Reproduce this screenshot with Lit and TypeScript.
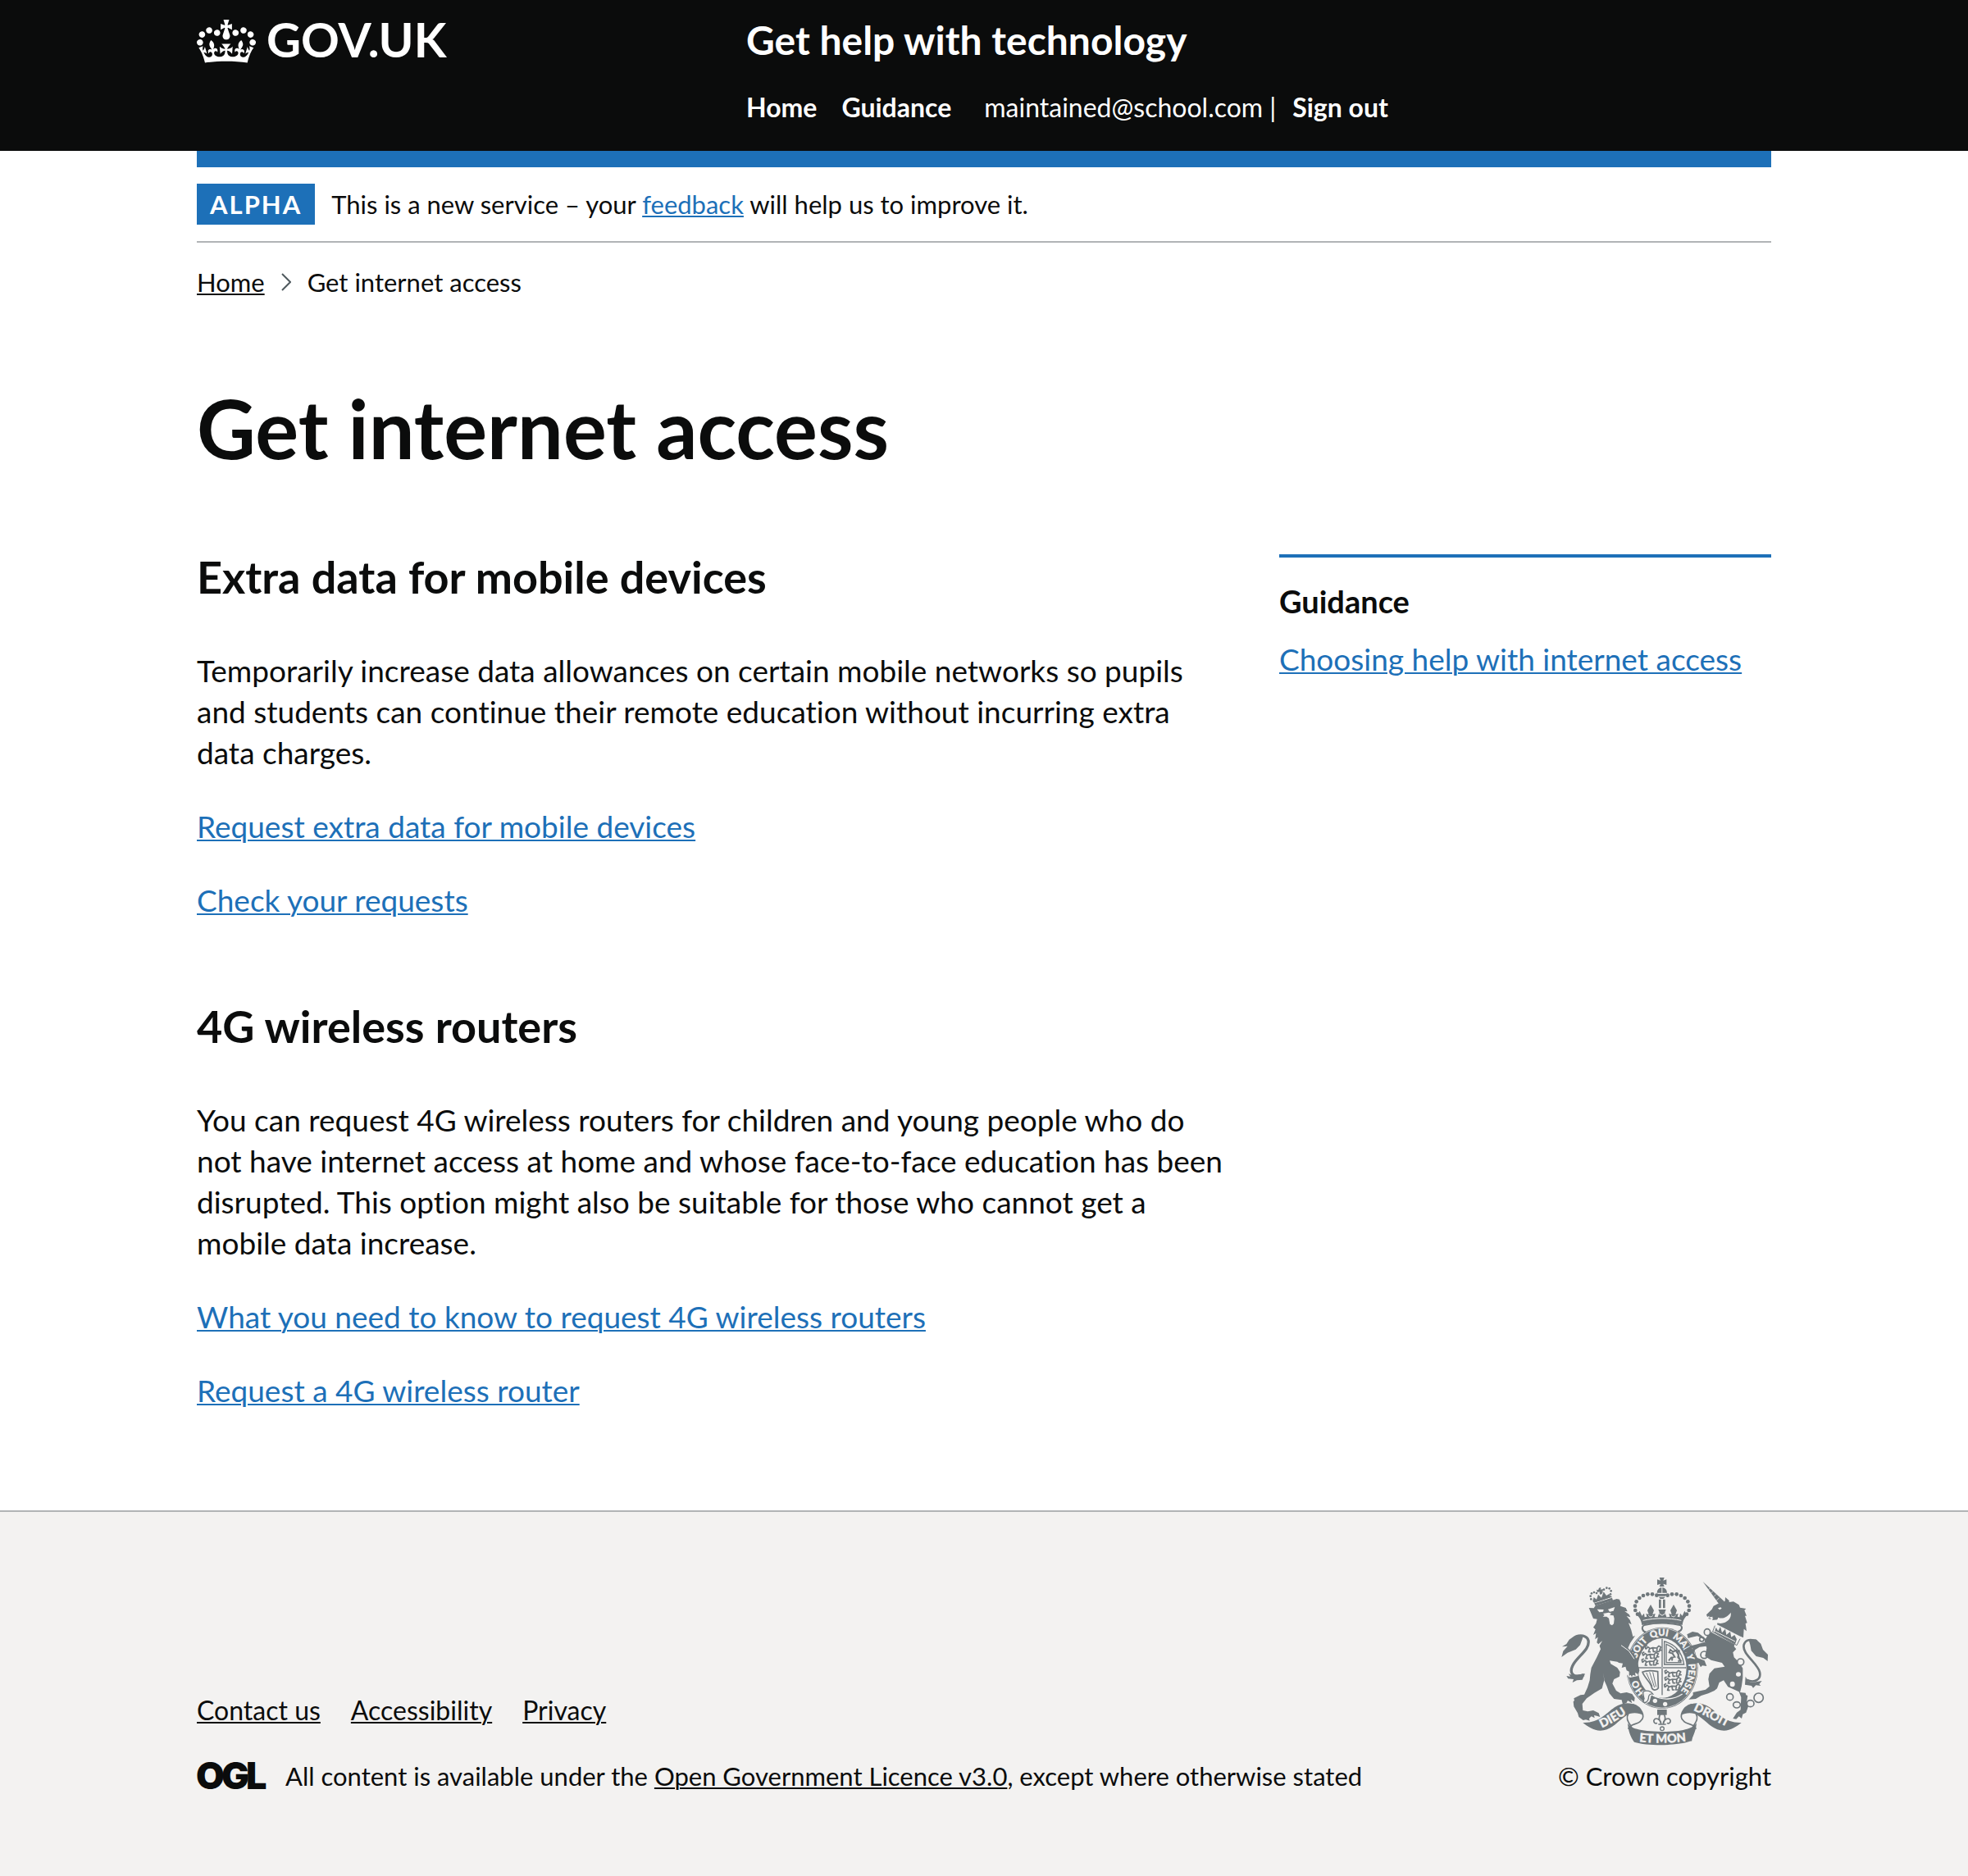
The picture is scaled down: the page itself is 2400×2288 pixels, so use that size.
import { LitElement, html, svg, css } from "lit";
import { customElement } from "lit/decorators.js";

interface Link {
  label: string;
  href: string;
}

interface Topic {
  title: string;
  body: string;
  links: Link[];
}

const TOPICS: Topic[] = [
  {
    title: "Extra data for mobile devices",
    body: "Temporarily increase data allowances on certain mobile networks so pupils and students can continue their remote education without incurring extra data charges.",
    links: [
      { label: "Request extra data for mobile devices", href: "#request-data" },
      { label: "Check your requests", href: "#requests" },
    ],
  },
  {
    title: "4G wireless routers",
    body: "You can request 4G wireless routers for children and young people who do not have internet access at home and whose face-to-face education has been disrupted. This option might also be suitable for those who cannot get a mobile data increase.",
    links: [
      { label: "What you need to know to request 4G wireless routers", href: "#routers" },
      { label: "Request a 4G wireless router", href: "#request-router" },
    ],
  },
];

const FOOTER_LINKS: Link[] = [
  { label: "Contact us", href: "#contact" },
  { label: "Accessibility", href: "#accessibility" },
  { label: "Privacy", href: "#privacy" },
];

@customElement("crown-icon")
export class CrownIcon extends LitElement {
  static styles = css`
    :host { display: block; }
    .crown { display: block; width: 72px; height: 53px; fill: currentColor; }
  `;

  render() {
    return html`<svg class="crown" viewBox="0 0 132 97" aria-hidden="true">
      <path fill-rule="evenodd" d="M25 30.2c3.5 1.5 7.7-.2 9.1-3.7 1.5-3.6-.2-7.8-3.9-9.2-3.6-1.4-7.6.3-9.1 3.9-1.4 3.5.3 7.5 3.9 9zM9 39.5c3.6 1.5 7.8-.2 9.2-3.7 1.5-3.6-.2-7.8-3.9-9.1-3.6-1.5-7.6.2-9.1 3.8-1.4 3.5.3 7.5 3.8 9zM4.4 57.2c3.5 1.5 7.7-.2 9.1-3.8 1.5-3.6-.2-7.7-3.9-9.1-3.5-1.5-7.6.3-9.1 3.8-1.4 3.5.3 7.6 3.9 9.1zm38.3-21.4c3.5 1.5 7.7-.2 9.1-3.8 1.5-3.6-.2-7.7-3.9-9.1-3.6-1.5-7.6.3-9.1 3.8-1.3 3.6.4 7.7 3.9 9.1zm64.4-5.6c-3.6 1.5-7.8-.2-9.1-3.7-1.5-3.6.2-7.8 3.8-9.2 3.6-1.4 7.7.3 9.2 3.9 1.3 3.5-.4 7.5-3.9 9zm15.9 9.3c-3.6 1.5-7.7-.2-9.1-3.7-1.5-3.6.2-7.8 3.7-9.1 3.6-1.5 7.7.2 9.2 3.8 1.5 3.5-.3 7.5-3.8 9zm4.7 17.7c-3.6 1.5-7.8-.2-9.2-3.8-1.5-3.6.2-7.7 3.9-9.1 3.6-1.5 7.7.3 9.2 3.8 1.3 3.5-.4 7.6-3.9 9.1zM89.3 35.8c-3.6 1.5-7.8-.2-9.2-3.8-1.4-3.6.2-7.7 3.9-9.1 3.6-1.5 7.7.3 9.2 3.8 1.4 3.6-.3 7.7-3.9 9.1zM69.7 17.7l8.9 4.7V9.3l-8.9 2.8c-.2-.3-.5-.6-.9-.9L72.4 0H59.6l3.5 11.2c-.3.3-.6.5-.9.9l-8.8-2.8v13.1l8.8-4.7c.3.3.6.7.9.9l-5 15.4v.1c-.2.8-.4 1.6-.4 2.4 0 4.1 3.1 7.5 7 8.1h.2c.3 0 .7.1 1 .1.4 0 .7 0 1-.1h.2c4-.6 7.1-4.1 7.1-8.1 0-.8-.1-1.7-.4-2.4V34l-5.1-15.4c.4-.2.7-.6 1-.9zM66 92.8c16.9 0 32.8 1.1 47.1 3.2 4-16.9 8.9-26.7 14-33.5l-9.6-3.4c1 4.9 1.1 7.2 0 10.2-1.5-1.4-3-4.3-4.2-8.7L108.6 76c2.8-2 5-3.2 7.5-3.3-4.4 9.4-10 11.9-13.6 11.2-4.3-.8-6.3-4.6-5.6-7.9 1-4.7 5.7-5.9 8-.5 4.3-8.7-3-11.4-7.6-8.8 7.1-7.2 7.9-13.5 2.1-21.1-8 6.1-8.1 12.3-4.5 20.8-4.7-5.4-12.1-2.5-9.5 6.2 3.4-5.2 7.9-2 7.2 3.1-.6 4.3-6.4 7.8-13.5 7.2-10.3-.9-10.9-8-11.2-13.8 2.5-.5 7.1 1.8 11 7.3L80.2 60c-4.1 4.4-8 5.3-12.3 5.4 1.4-4.4 8-11.6 8-11.6H55.5s6.4 7.2 7.9 11.6c-4.2-.1-8-1-12.3-5.4l1.4 16.4c3.9-5.5 8.5-7.7 10.9-7.3-.3 5.8-.9 12.8-11.1 13.8-7.2.6-12.9-2.9-13.5-7.2-.7-5 3.8-8.3 7.1-3.1 2.7-8.7-4.6-11.6-9.4-6.2 3.7-8.5 3.6-14.7-4.6-20.8-5.8 7.6-5 13.9 2.2 21.1-4.7-2.6-11.9.1-7.7 8.8 2.3-5.5 7.1-4.2 8.1.5.7 3.3-1.3 7.1-5.7 7.9-3.5.7-9-1.8-13.5-11.2 2.5.1 4.7 1.3 7.5 3.3l-4.7-15.4c-1.2 4.4-2.7 7.2-4.3 8.7-1.1-3-.9-5.3 0-10.2l-9.5 3.4c5 6.9 9.9 16.7 14 33.5 14.8-2.1 30.8-3.2 47.7-3.2z" />
    </svg>`;
  }
}

/* Pearls on the left arch of the crown, mirrored about x = 408. */
const PEARLS = [[388, 107], [372, 103], [355, 103], [339, 108], [325, 117], [314, 130], [309, 146], [310, 162], [318, 176]];

/* Pearls of the small crown that the lion wears. */
const LION_PEARLS = [[118, 91], [116, 80], [120, 70], [129, 66], [138, 69], [157, 65], [165, 56], [175, 50], [185, 52], [191, 61], [189, 73]];

@customElement("royal-arms")
export class RoyalArms extends LitElement {
  static styles = css`
    :host { display: block; }
    .arms { display: block; width: 250px; height: 204px; fill: #6f777b; stroke: none; overflow: visible; }
    .paper { fill: #f3f2f1; }
    .line { fill: none; stroke: #6f777b; }
    .cut { fill: none; stroke: #f3f2f1; }
    .motto { fill: #f3f2f1; stroke: #f3f2f1; font: 900 44px Lato, sans-serif; }
    .garter { fill: #f3f2f1; stroke: #f3f2f1; font: 900 34px Lato, sans-serif; }
  `;

  /* One passant lion, reused for each row of the England quarters. */
  private passant(x: number, y: number) {
    return svg`<path class="line" stroke-width="5" stroke-linejoin="round" d="M${x} ${y + 8}l8-8 8 6 10-3 14 1 8-8 8 5-5 8 8 4M${x + 14} ${y + 6}l-4 12h8M${x + 26} ${y + 5}l2 12h8M${x + 42} ${y + 4}l-2 13h8l5-7M${x} ${y + 8}l-2-10 7-4" />`;
  }

  render() {
    return html`<svg class="arms" viewBox="42 42 750 612" role="img" aria-label="Royal coat of arms">
      <!-- crown -->
      <path d="M398 42h18l-4 11 12-4v20l-12-4 4 10h-18l4-10-12 4V49l12 4z" />
      <path d="M389 98a19 19 0 0 1 17-20v20zM409 78a19 19 0 0 1 17 20h-17zM388 102h38l-6 8h-26zM396 113h23l-6 7h-12z" />
      <path d="M396 122h8v32h-8zM411 122h8v32h-8z" />
      ${PEARLS.map(([x, y]) => svg`<circle cx=${x} cy=${y} r="7" /><circle cx=${816 - x} cy=${y} r="7" />`)}
      <path d="M317 180l9-16 8 18 8-9 2 14 8-2-3-11 10 3-5-15 12-21 12 21-5 15 10-3-3 12 12 1 6-18-4-10h28l-4 10 6 18 12-1-3-12 10 3-5-15 12-21 12 21-5 15 10-3-3 11 8 2 2-14 8 9 8-18 9 16c-8 8-15 18-17 36-50-12-98-12-148 0-2-18-9-28-17-36z" />
      <path class="cut" stroke-width="3" d="M338 199c46-10 94-10 140 0M358 181c6 6 12 6 16 0M441 181c6 6 12 6 16 0M396 173l12 8 12-8" />
      <path class="line" stroke-width="6" d="M342 216c44-10 88-10 132 0 12 8 4 22-8 24M342 216c-12 8-6 24 8 26" />

      <!-- garter and shield -->
      <ellipse cx="408" cy="373" rx="131" ry="149" />
      <ellipse class="cut" cx="408" cy="373" rx="128" ry="146" stroke-width="2" />
      <ellipse class="paper" cx="408" cy="373" rx="89" ry="109" />
      <path id="ring" fill="none" d="M408 491a97 118 0 0 1 0-236a97 118 0 0 1 0 236" />
      <text class="garter"><textPath href="#ring" startOffset="72">HO</textPath></text>
      <text class="garter"><textPath href="#ring" startOffset="204">SOIT</textPath></text>
      <text class="garter"><textPath href="#ring" startOffset="296">QUI</textPath></text>
      <text class="garter"><textPath href="#ring" startOffset="376">MAL</textPath></text>
      <text class="garter"><textPath href="#ring" startOffset="458">Y</textPath></text>
      <text class="garter"><textPath href="#ring" startOffset="492">PENSE</textPath></text>
      <path class="line" stroke-width="6" d="M408 266v206M320 372h176" />
      <path class="cut" stroke-width="2" d="M408 268v204M322 372h172" />
      ${this.passant(348, 296)}${this.passant(338, 320)}${this.passant(336, 345)}
      ${this.passant(420, 386)}${this.passant(420, 411)}${this.passant(418, 436)}
      <path class="line" stroke-width="4" d="M416 360V276c36 8 64 36 72 84zM423 353V286c28 10 46 34 54 67z" />
      <path class="line" stroke-width="6" d="M432 346l10-12 12-2-8-12-12-4 4-10 10 8 12-6 8 14-2 12 10 12-10 2M446 332l-2 14M464 318l8-10" />
      <path class="line" stroke-width="5" d="M336 388c16-8 36-6 56-2l2 60c-8 12-22 8-24-2-4-20-26-34-34-56z" />
      <path class="line" stroke-width="3" d="M350 390l22 50M362 388l18 56M374 388l12 54" />
      <path class="cut" stroke-width="4" d="M374 474c36 18 76 16 108-6" />
      <circle class="paper" cx="382" cy="493" r="8" /><circle class="paper" cx="419" cy="505" r="8" />
      <path class="paper" d="M334 456l22-2 20 8 4 10-12 2-6 22-14 8-10-8 6-12-8-12z" />
      <path class="line" stroke-width="4" d="M338 460c14-8 30-2 36 8-12-2-16 6-16 16-2 12-12 20-20 12 8-8 0-22 0-36z" />

      <!-- lion -->
      <g transform="translate(30 30)">
        <path class="paper" d="M228 258l34 30 20 34 8 50-30 6-40-40z" />
        <path d="M110 123l18 1 6-9 78-25 10 2 5 14-2 10 20 7 6 13-10-1 16 12 5 10-14-4 12 14 6 17-11-6 10 26 6 24 8-3-18 27-8 18 24 24 12 34 6 24-4 14-12-6 2 12-10-4-4 8-4-8-6 4v-16l-9-4-4-14-14 4 4-16-14-2-6-4-28-4 4 12 24 14 10 16-2 16-20 10-6 16 14 26 16 10 22-4 20 6 10 14-2 14-12-8 4 14-16-10-4 8-14 6-4-16-28-4-17-20-10-28-8-18-4-28 3 26-8 30-28 16-28 20-16 20 2 24 18 4 20-4 20 10 5 14-12-4-10-2 2 10-12-6-8 8 2 8-14-4-10 2-16-12-4-14-14-24-2-18 4-4-2-8 24-12 14-2 12-26 8-26 2-22 4-24 20-38 14-30-4-12 10-18-6 4-8 8-6-6 4-20-10 8 3-22-10 6 8-20-8-8 10-14 4-16-14-2z" />
        <path class="paper" d="M140 128l24 1-2 8-14 2zM180 128l25-8-5 14-14 3z" />
        <path class="paper" d="M162 144l20-4 10 3-6 6 14 2 3 12-2 18-6 6-8-4-4-22-8-6-14 0 6-6z" />
        <path d="M126 99l66-20 6 16-64 20z" />
        <path class="cut" stroke-width="3" d="M128 105l66-20" />
        <path d="M124 98l4-14 10 8 6-18 12 12 8-22 10 14 10-6 6 12-60 20zM138 56l6 2 3-8 7-2-1 8 8-2 1 7-7 1 4 10-9 2-1-10-8 2z" />
        ${LION_PEARLS.map(([x, y]) => svg`<circle cx=${x} cy=${y} r="4" />`)}
        <path class="line" stroke-width="10" d="M92 368c-44 16-56-10-38-40 20-32 60-54 54-86-6-18-26-20-46-14" />
        <path d="M90 221l-32 4-20 14-10 16-16 10 20-2-16 18-6 22 22-16 30-12 16-16 8-22z" />
        <path d="M28 372l14 2-6-10 14 6 46-6-10 22-20 2-16 8 4-12-20-2z" />
        <path class="cut" stroke-width="3" d="M228 260l28 20 20 30" />
      </g>

      <!-- unicorn -->
      <g transform="translate(405 30)">
        <path d="M152 27l78 72-16 14z" />
        <path class="cut" stroke-width="2" d="M172 56l8-6M182 69l8-8M192 82l9-9M202 96l10-10" />
        <path d="M234 84l14 12 0 6 16-2 20 12 4 10 22 4-6 6 8 20-6 0 8 26-6 2 4 28-10-8-2 32-14-6-82-42 4-18-22 2 4-8-12 4-6-2 4-10-8 4-3-8 20-20 6-12 20-10 22-8z" />
        <path class="paper" d="M207 124l10-3 4 4-8 5zM254 140c4 20-12 38-38 40l-22-4c8-6 12-10 14-18 16 8 34-2 46-18zM170 158l18-3-2 8z" />
        <path d="M190 206l80 44-4 14 8 10-12 12 4 18 20 20 12 20v34l-4 30-6 24 20 2 2 8 6 2-4 26 6 14-8 22-12 6-4 16-10-8-10 10-12-2 14-22 14-10 2-46-8-20-40-18-16-24-16 8-8 22-10 8-22 10-26 8-20 12-26 2 16-16v-10l46-10 14-12-4-26 4-20 18-20 38-6-10-14-40-10-22-14 6-30-8-26 10-18z" />
        <path d="M176 250l-28-16-16-8-20 4-14 4-4-14 20-10 20 4 30 24 16 4zM176 262l-36 4-16 10-6 10 14 20 26 10 8 20-16-2-6 6-8-16-10 2-2-20-14-20 6-16-10 2-14 14-12 2 4-12 24-14 24-6 26-8z" />
        <path class="paper" d="M192 186l98 48-12 28-92-48z" />
        <path class="line" stroke-width="3" d="M196 188l-8 22 88 50 12-24" />
        <path d="M194 212l6-18 8 14 8-16 6 22 12-14 4 22 14-12 4 20 12-8 8 16-6 18z" />
        <path class="cut" stroke-width="3" d="M196 208l74 38" />
        <path class="line" stroke-width="8" d="M312 386c30 14 54-2 48-28-8-34-66-66-58-100 6-20 26-22 48-12" />
        <path d="M320 240l26-2 18 16 8 22 18 18-1 24-16-12-26-6-18-20-4-22z" />
        <path d="M308 374l10 18 16 4 34-6-10 12 6 6-18-2-10 10-6-8-24-4z" />
        <g class="line" stroke-width="5">
          <ellipse cx="168" cy="212" rx="11" ry="12" /><ellipse cx="148" cy="238" rx="8" ry="8" />
          <circle cx="157" cy="295" r="13" /><circle cx="251" cy="449" r="12" />
          <ellipse cx="276" cy="478" rx="13" ry="11" /><ellipse cx="326" cy="473" rx="13" ry="12" />
          <circle cx="356" cy="452" r="17" /><circle class="paper" cx="290" cy="321" r="12" />
        </g>
        <ellipse class="paper" cx="282" cy="366" rx="9" ry="8" /><ellipse class="paper" cx="260" cy="402" rx="9" ry="10" />
      </g>

      <!-- fleur-de-lis -->
      <path d="M390 525h35v20h-35z" />
      <path class="line" stroke-width="5" d="M408 534c-16 16-12 28-4 42-2-16-20-24-26-12-2 10 6 14 12 10M408 534c16 16 12 28 4 42 2-16 20-24 26-12 2 10-6 14-12 10M394 579h28" />
      <circle class="line" stroke-width="4" cx="408" cy="595" r="7" />

      <!-- ribbons -->
      <path d="M118 573c60 2 84-34 116-56 30-20 62-18 78-6 16 10 24 20 26 34-16-8-44-12-64 4-28 18-46 46-80 52-30 6-56-12-76-28z" />
      <path class="line" stroke-width="5" d="M300 506c34 10 48 46 30 60-12 16-38 8-46 30M284 540c-10 18 0 30 10 46 6 10 4 30 12 54" />
      <path d="M698 573c-60 2-84-34-116-56-30-20-62-18-78-6-16 10-24 20-26 34 16-8 44-12 64 4 28 18 46 46 80 52 30 6 56-12 76-28z" />
      <path class="line" stroke-width="5" d="M516 506c-34 10-48 46-30 60 12 16 38 8 46 30M532 540c10 18 0 30-10 46-6 10-4 30-8 54" />
      <path d="M282 574c10 20 40 30 126 32 80 0 112-12 126-32-2 26-10 42-20 66-56 20-160 18-208 4-14-18-22-42-24-70z" />
      <path id="left" fill="none" d="M188 592q50-22 110-66" />
      <path id="right" fill="none" d="M522 528q50 22 132 66" />
      <path id="mid" fill="none" d="M316 642q92 10 190-2" />
      <text class="motto"><textPath href="#left">DIEU</textPath></text>
      <text class="motto"><textPath href="#right">DROIT</textPath></text>
      <text class="motto"><textPath href="#mid" startOffset="8">ET MON</textPath></text>
    </svg>`;
  }
}

@customElement("app-root")
export class AppRoot extends LitElement {
  static styles = css`
    :host {
      display: flex;
      flex-direction: column;
      min-height: 100vh;
      background: #fff;
      color: #0b0c0c;
      font: 400 31px/40px Lato, sans-serif;
      font-variant-ligatures: none;
    }
    h1, h2, p, ul, ol { margin: 0; padding: 0; }
    ul, ol { list-style: none; }
    a {
      color: #1d70b8;
      text-decoration-line: underline;
      text-decoration-thickness: 2px;
      text-underline-offset: 2px;
    }
    .wrap { box-sizing: border-box; width: 80%; max-width: 1920px; margin: 0 auto; }

    .header { background: #0b0c0c; color: #fff; }
    .header a { color: #fff; text-decoration: none; }
    .header-grid {
      display: grid;
      grid-template-columns: 1fr 2fr;
      column-gap: 45px;
      padding: 19px 0 33px;
    }
    .logo { display: flex; align-items: flex-end; gap: 13px; height: 58px; font-size: 58px; font-weight: 700; line-height: 58px; }
    .service { display: block; font-size: 48px; font-weight: 700; line-height: 60px; }
    .nav { display: flex; margin-top: 32px; font-size: 32px; }
    .nav-list { display: flex; gap: 30px; font-weight: 700; }
    .account { display: flex; gap: 20px; margin-left: 40px; }
    .user { display: flex; gap: 8px; }
    .sign-out { font-weight: 700; }

    .bar { height: 20px; background: #1d70b8; }
    .phase { display: flex; align-items: baseline; gap: 20px; padding: 20px 0; border-bottom: 2px solid #b1b4b6; }
    .tag { padding: 5px 16px; background: #1d70b8; color: #fff; font-weight: 700; letter-spacing: 2px; }
    .crumbs { display: flex; align-items: center; gap: 20px; margin-top: 28px; }
    .crumbs a, .footer a { color: inherit; }
    .chevron { display: block; width: 12px; height: 24px; fill: none; stroke: #505a5f; stroke-width: 2; }
    .crumb { display: flex; align-items: center; gap: 20px; }

    .title { margin-top: 108px; font-size: 99px; font-weight: 700; line-height: 100px; }
    .columns {
      display: grid;
      grid-template-columns: 21fr 10fr;
      column-gap: 60px;
      align-items: start;
      margin-top: 104px;
      padding-bottom: 121px;
      font-size: 37px;
      line-height: 50px;
    }
    .topics { display: grid; gap: 101px; }
    .topic { display: grid; gap: 40px; }
    .heading { margin-bottom: 21px; font-size: 54px; font-weight: 700; line-height: 56px; }
    .aside { display: grid; gap: 21px; padding-top: 28px; border-top: 4px solid #1d70b8; }
    .aside-title { font-size: 38px; font-weight: 700; line-height: 50px; }

    .footer { flex: 1; border-top: 2px solid #b1b4b6; background: #f3f2f1; }
    .footer-row { display: flex; justify-content: space-between; align-items: flex-end; padding: 80px 0; }
    .footer-main { display: grid; gap: 40px; }
    .footer-links { display: flex; gap: 37px; font-size: 32px; }
    .licence { display: flex; align-items: center; gap: 26px; }
    .ogl { display: block; width: 82px; height: 34px; overflow: visible; fill: #0b0c0c; font: 900 45px Inter, sans-serif; }
    .crown-copy { display: flex; flex-direction: column; align-items: center; gap: 18px; }
  `;

  render() {
    return html`
      <header class="header">
        <div class="wrap header-grid">
          <a class="logo" href="#govuk"><crown-icon></crown-icon><span>GOV.UK</span></a>
          <div>
            <a class="service" href="#service">Get help with technology</a>
            <nav class="nav" aria-label="Main">
              <ul class="nav-list">
                <li><a href="#home">Home</a></li>
                <li><a href="#guidance">Guidance</a></li>
              </ul>
              <div class="account">
                <span class="user"><span>maintained@school.com</span><span>|</span></span>
                <a class="sign-out" href="#sign-out">Sign out</a>
              </div>
            </nav>
          </div>
        </div>
      </header>

      <div class="wrap">
        <div class="bar"></div>
        <div class="phase">
          <strong class="tag">ALPHA</strong>
          <span>This is a new service – your <a href="#feedback">feedback</a> will help us to improve it.</span>
        </div>
        <nav aria-label="Breadcrumb">
          <ol class="crumbs">
            <li><a href="#home">Home</a></li>
            <li class="crumb">
              <svg class="chevron" viewBox="0 0 12 24" aria-hidden="true"><path d="M1 2l10 10L1 22" /></svg>
              <span>Get internet access</span>
            </li>
          </ol>
        </nav>

        <main>
          <h1 class="title">Get internet access</h1>
          <div class="columns">
            <div class="topics">
              ${TOPICS.map((t) => html`
                <section class="topic">
                  <h2 class="heading">${t.title}</h2>
                  <p>${t.body}</p>
                  ${t.links.map((l) => html`<p><a href=${l.href}>${l.label}</a></p>`)}
                </section>`)}
            </div>
            <aside class="aside">
              <h2 class="aside-title">Guidance</h2>
              <p><a href="#choosing">Choosing help with internet access</a></p>
            </aside>
          </div>
        </main>
      </div>

      <footer class="footer">
        <div class="wrap footer-row">
          <div class="footer-main">
            <ul class="footer-links">
              ${FOOTER_LINKS.map((l) => html`<li><a href=${l.href}>${l.label}</a></li>`)}
            </ul>
            <div class="licence">
              <svg class="ogl" viewBox="0 0 82 34" aria-hidden="true"><text x="-1 30 60" y="33">OGL</text></svg>
              <span>All content is available under the <a href="#ogl">Open Government Licence v3.0</a>, except where otherwise stated</span>
            </div>
          </div>
          <div class="crown-copy">
            <royal-arms></royal-arms>
            <span>© Crown copyright</span>
          </div>
        </div>
      </footer>
    `;
  }
}
